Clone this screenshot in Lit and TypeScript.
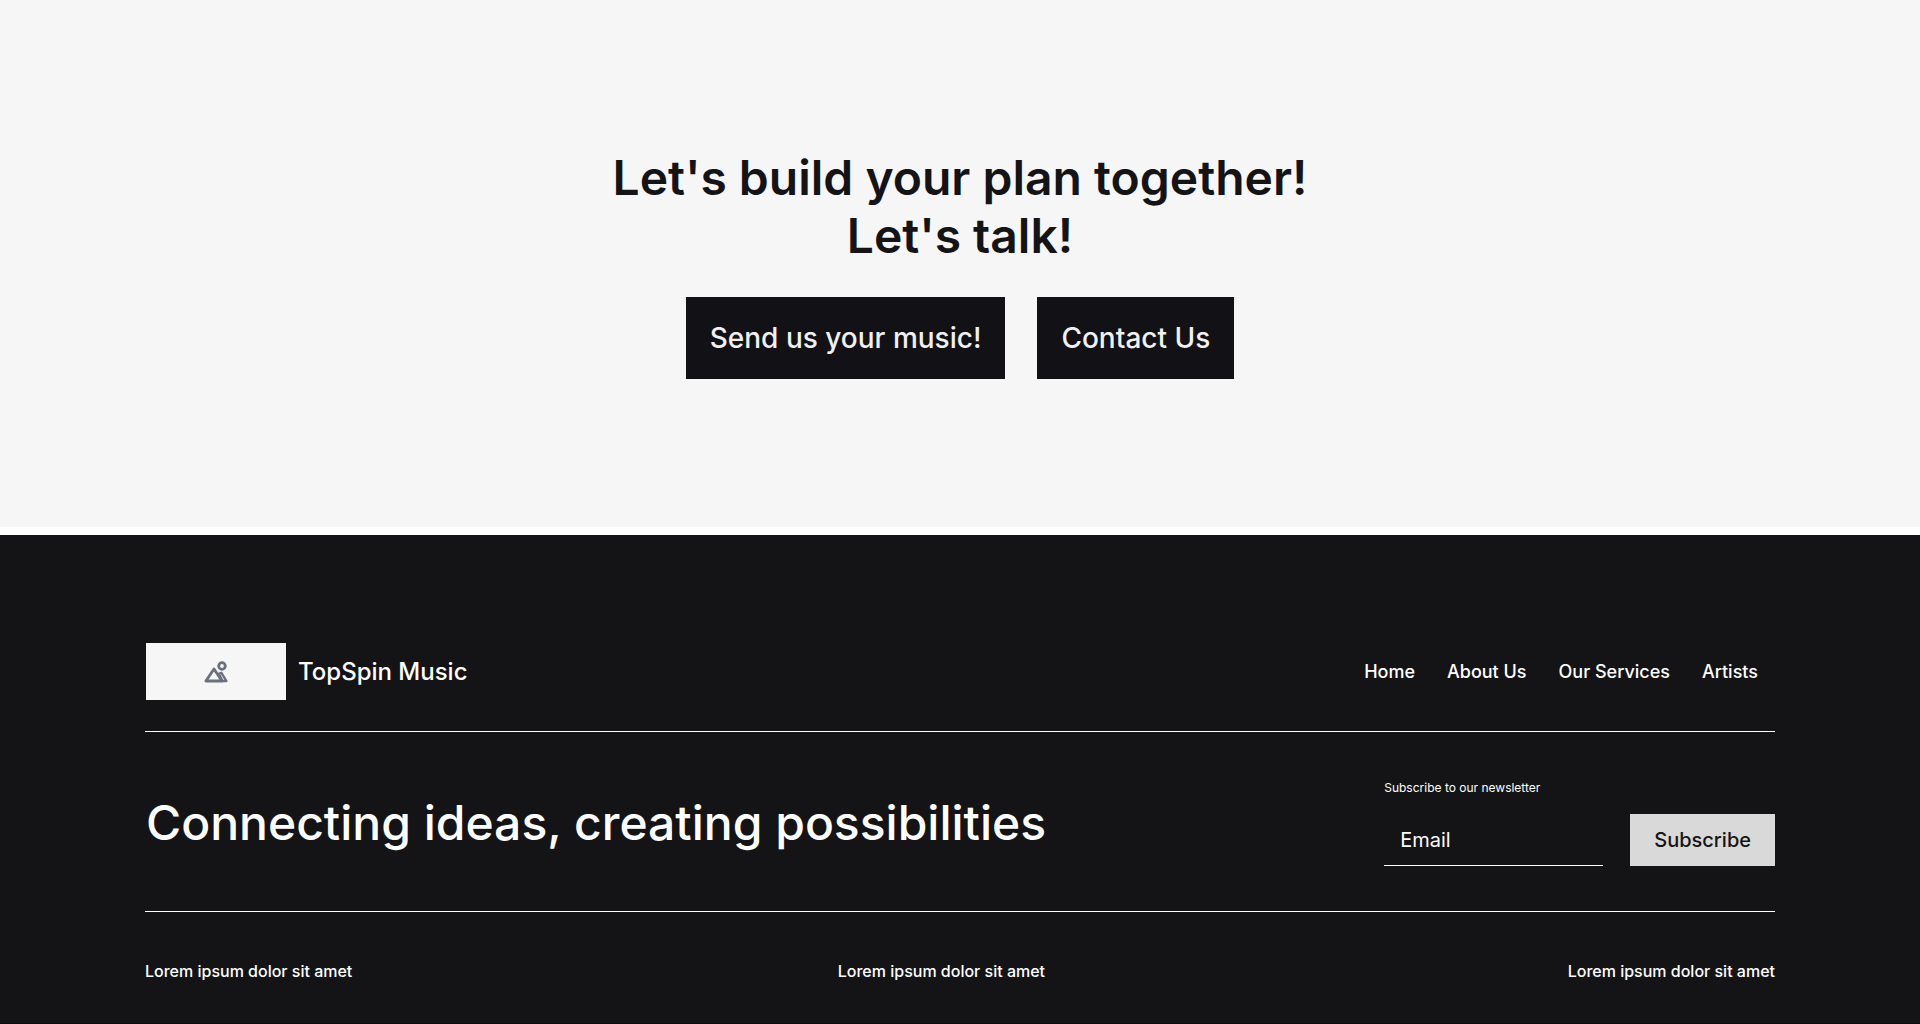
import { LitElement, html, css } from "lit";
import { customElement } from "lit/decorators.js";

const NAV_LINKS = ["Home", "About Us", "Our Services", "Artists"];
const NOTES = ["Lorem ipsum dolor sit amet", "Lorem ipsum dolor sit amet", "Lorem ipsum dolor sit amet"];

@customElement("site-cta")
class SiteCta extends LitElement {
  static styles = css`
    :host {
      display: block;
    }
    .cta {
      display: flex;
      flex-direction: column;
      align-items: center;
      gap: 32px;
      padding: 149px 24px 148px;
      background: #f6f6f6;
    }
    .title {
      margin: 0;
      color: #141416;
      font-size: 48px;
      font-weight: 600;
      line-height: 58px;
      text-align: center;
    }
    .actions {
      display: flex;
      flex-wrap: wrap;
      justify-content: center;
      gap: 32px;
    }
    .action {
      padding: 24px;
      border: 0;
      background: #121216;
      color: #f0f0f0;
      font: 500 28px/34px Inter, sans-serif;
      cursor: pointer;
    }
  `;

  render() {
    return html`
      <section class="cta">
        <h2 class="title">Let's build your plan together!<br />Let's talk!</h2>
        <div class="actions">
          <button class="action" type="button">Send us your music!</button>
          <button class="action" type="button">Contact Us</button>
        </div>
      </section>
    `;
  }
}

@customElement("site-footer")
class SiteFooter extends LitElement {
  static styles = css`
    :host {
      display: block;
      border-bottom: 1px solid #120812;
      background: #141416;
      color: #ffffff;
    }
    .footer {
      max-width: 1630px;
      margin: 0 auto;
      padding: 108px 24px 24px;
    }
    .row {
      display: flex;
      align-items: center;
      justify-content: space-between;
      gap: 24px;
    }
    .top {
      padding: 0 17px 31px 1px;
      border-bottom: 1px solid #ffffff;
    }
    .brand {
      display: flex;
      align-items: center;
      gap: 12px;
      font-size: 24px;
      font-weight: 500;
      line-height: 33px;
    }
    .logo {
      display: grid;
      place-items: center;
      width: 140px;
      height: 57px;
      background: #f6f6f6;
    }
    .icon {
      display: block;
      width: 24px;
      height: 24px;
    }
    .nav {
      display: flex;
      gap: 32px;
    }
    .link {
      color: inherit;
      font-size: 18px;
      font-weight: 500;
      line-height: 25px;
      text-decoration: none;
    }
    .middle {
      padding: 48px 0 45px 1px;
      border-bottom: 1px solid #ffffff;
    }
    .tagline {
      margin: 0;
      font-size: 48px;
      font-weight: 500;
      line-height: 58px;
    }
    .form {
      display: grid;
      grid-template-columns: 219px auto;
      column-gap: 27px;
      row-gap: 18px;
    }
    .label {
      grid-column: 1 / -1;
      font-size: 12px;
      line-height: 16px;
    }
    .email {
      box-sizing: border-box;
      width: 100%;
      padding: 0 16px;
      border: 0;
      border-bottom: 1px solid #ffffff;
      border-radius: 0;
      background: transparent;
      color: #ffffff;
      font: 400 20px/24px Inter, sans-serif;
    }
    .email::placeholder {
      color: #ffffff;
      opacity: 1;
    }
    .submit {
      padding: 14px 24px;
      border: 0;
      background: #d9d9d9;
      color: #141416;
      font: 500 20px/24px Inter, sans-serif;
      cursor: pointer;
    }
    .bottom {
      display: grid;
      grid-template-columns: 17fr 13fr 10fr;
      padding-top: 47px;
    }
    .note {
      margin: 0;
      font-size: 16px;
      font-weight: 500;
      line-height: 24px;
    }
    .note:last-child {
      text-align: right;
    }
  `;

  render() {
    return html`
      <footer class="footer">
        <div class="row top">
          <div class="brand">
            <span class="logo">
              <svg class="icon" viewBox="0 0 24 24" fill="none" stroke="#68717d" stroke-width="2.8" stroke-linejoin="round" aria-hidden="true">
                <circle cx="18" cy="6" r="3.3" />
                <path d="M1.9 21 L10 9 L18 21 Z" />
                <path d="M14.8 13.8 L17.4 12.8 L22.4 21 H18.4 Z" stroke-width="2.4" />
              </svg>
            </span>
            <span>TopSpin Music</span>
          </div>
          <nav class="nav">
            ${NAV_LINKS.map((name) => html`<a class="link" href="#">${name}</a>`)}
          </nav>
        </div>
        <div class="row middle">
          <p class="tagline">Connecting ideas, creating possibilities</p>
          <form class="form">
            <label class="label" for="email">Subscribe to our newsletter</label>
            <input class="email" id="email" type="email" placeholder="Email" />
            <button class="submit" type="button">Subscribe</button>
          </form>
        </div>
        <div class="bottom">
          ${NOTES.map((note) => html`<p class="note">${note}</p>`)}
        </div>
      </footer>
    `;
  }
}

@customElement("app-root")
class AppRoot extends LitElement {
  static styles = css`
    :host {
      display: flex;
      flex-direction: column;
      gap: 8px;
      min-height: 100vh;
      background: #ffffff;
      font-family: Inter, sans-serif;
    }
    .fill {
      flex: 1;
    }
  `;

  render() {
    return html`
      <site-cta></site-cta>
      <site-footer class="fill"></site-footer>
    `;
  }
}
